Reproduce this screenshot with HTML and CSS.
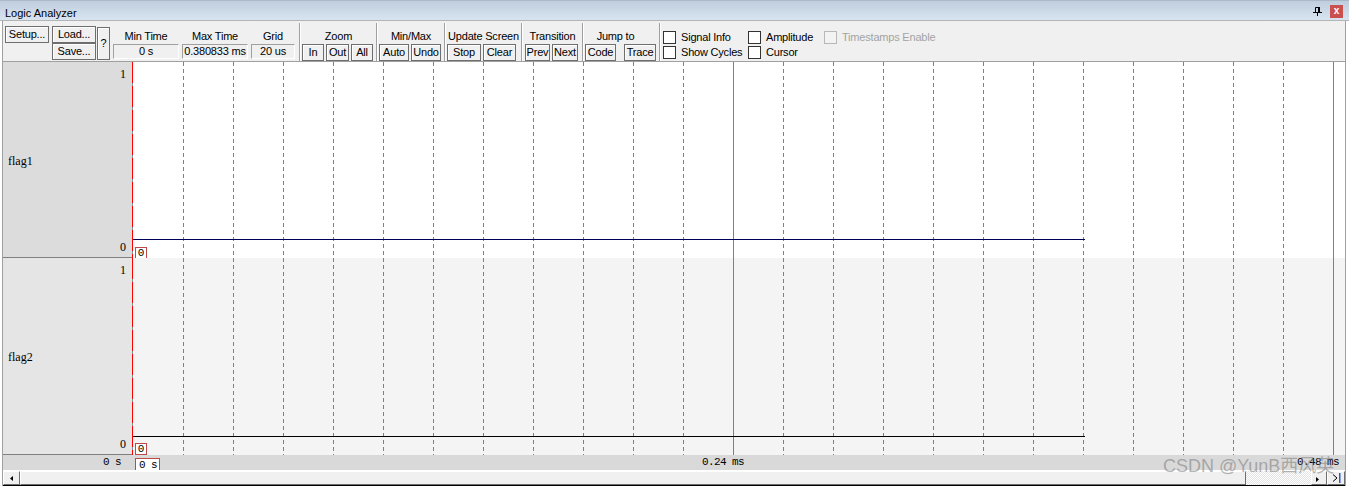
FILE: index.html
```html
<!DOCTYPE html>
<html>
<head>
<meta charset="utf-8">
<title>Logic Analyzer</title>
<link rel="stylesheet" href="styles.css">
</head>
<body>
<div class="app">
  <div class="titlebar">
    <span class="title">Logic Analyzer</span>
    <div class="title-tools">
      <svg class="pin" width="9" height="9" viewBox="0 0 9 9"><path d="M2.5 0.5H5.5V5M2.5 0.5V5" stroke="#000" fill="none"/><rect x="5" y="0" width="2" height="5" fill="#000"/><rect x="0" y="5" width="9" height="1" fill="#000"/><rect x="4" y="6" width="1" height="3" fill="#000"/></svg>
      <span class="close">x</span>
    </div>
  </div>
  <div class="frame">
    <div class="toolbar">
      <div class="filegrp">
        <div class="btn setup">Setup...</div>
        <div class="btn load">Load...</div>
        <div class="btn help">?</div>
        <div class="btn save">Save...</div>
      </div>
      <div class="timegrp">
        <div class="field w66"><span class="lab">Min Time</span><span class="val">0 s</span></div>
        <div class="field w66"><span class="lab">Max Time</span><span class="val">0.380833 ms</span></div>
        <div class="field w44"><span class="lab">Grid</span><span class="val">20 us</span></div>
      </div>
      <div class="sep"></div>
      <div class="grp gz">
        <span class="lab">Zoom</span>
        <div class="btns"><div class="btn b22">In</div><div class="btn b23">Out</div><div class="btn b22">All</div></div>
      </div>
      <div class="sep"></div>
      <div class="grp gm">
        <span class="lab">Min/Max</span>
        <div class="btns"><div class="btn b30">Auto</div><div class="btn b30">Undo</div></div>
      </div>
      <div class="sep"></div>
      <div class="grp gu">
        <span class="lab">Update Screen</span>
        <div class="btns"><div class="btn b34">Stop</div><div class="btn b33">Clear</div></div>
      </div>
      <div class="sep"></div>
      <div class="grp gt">
        <span class="lab">Transition</span>
        <div class="btns"><div class="btn b25">Prev</div><div class="btn b26">Next</div></div>
      </div>
      <div class="sep"></div>
      <div class="grp gj">
        <span class="lab">Jump to</span>
        <div class="btns"><div class="btn b31">Code</div><div class="btn b32">Trace</div></div>
      </div>
      <div class="sep"></div>
      <div class="checks">
        <label class="chk"><span class="box"></span>Signal Info</label>
        <label class="chk"><span class="box"></span>Amplitude</label>
        <label class="chk dis"><span class="box"></span>Timestamps Enable</label>
        <label class="chk"><span class="box"></span>Show Cycles</label>
        <label class="chk"><span class="box"></span>Cursor</label>
      </div>
    </div>

    <div class="scope">
      <div class="row r1">
        <div class="lbl"><span class="hi">1</span><span class="name">flag1</span><span class="lo">0</span></div>
        <div class="mark"></div>
        <div class="plot">
          <div class="grid"><i></i><i></i><i></i><i></i><i></i><i></i><i></i><i></i><i></i><i></i><i></i><i class="solid"></i><i></i><i></i><i></i><i></i><i></i><i></i><i></i><i></i><i></i><i></i><i></i><i class="solid"></i></div>
          <div class="sig"></div>
          <span class="vbox">0</span>
        </div>
      </div>
      <div class="row r2">
        <div class="lbl"><span class="hi">1</span><span class="name">flag2</span><span class="lo">0</span></div>
        <div class="mark"></div>
        <div class="plot">
          <div class="grid"><i></i><i></i><i></i><i></i><i></i><i></i><i></i><i></i><i></i><i></i><i></i><i class="solid"></i><i></i><i></i><i></i><i></i><i></i><i></i><i></i><i></i><i></i><i></i><i></i><i class="solid"></i></div>
          <div class="sig"></div>
          <span class="vbox">0</span>
        </div>
      </div>
      <div class="axis">
        <div class="axl">0 s</div>
        <div class="axp">
          <span class="abox">0 s</span>
          <span class="tick mid">0.24 ms</span>
          <span class="tick end">0.48 ms</span>
        </div>
      </div>
    </div>

    <div class="hscroll">
      <div class="sbb sl"><svg width="3" height="5" viewBox="0 0 3 5"><path d="M3 0V5L0 2.5Z" fill="#000"/></svg></div>
      <div class="thumb"></div>
      <div class="track"></div>
      <div class="sbb sr"><svg width="3" height="5" viewBox="0 0 3 5"><path d="M0 0V5L3 2.5Z" fill="#000"/></svg></div>
      <div class="sbb send"><svg width="9" height="10" viewBox="0 0 9 10"><path d="M1 1.5L5 5L1 8.5" stroke="#000" fill="none"/><rect x="7" y="0" width="1.5" height="10" fill="#2a5bd7"/></svg></div>
    </div>
  </div>
  <div class="watermark">CSDN @YunB西风英</div>
</div>
</body>
</html>
```

FILE: styles.css
```css
* { box-sizing: border-box; margin: 0; padding: 0; }
html, body { background: #fff; }
body {
  font-family: "Liberation Sans", Arial, sans-serif;
  font-size: 11px;
  color: #000;
  width: 1349px;
  height: 487px;
  overflow: hidden;
}
.app { position: relative; width: 1349px; height: 487px; }

/* title bar */
.titlebar {
  height: 21px;
  display: flex;
  background: linear-gradient(#bfcddd, #d8e4f0);
  border-top: 1px solid #aab8c8;
  border-bottom: 1px solid #b4b4b4;
  padding-left: 5px;
}
.title { margin-top: 5px; line-height: 14px; font-size: 11px; }
.title-tools { margin-left: auto; display: flex; align-items: flex-start; gap: 8px; padding-right: 6px; }
.pin { margin-top: 6px; display: block; }
.close {
  margin-top: 4px;
  width: 13px; height: 13px;
  background: #c9504f;
  color: #fff;
  font: bold 10px/12px "Liberation Sans", sans-serif;
  text-align: center;
}

/* frame */
.frame {
  margin-left: 2px;
  width: 1344px;
  border-left: 1px solid #a0a0a0;
  border-right: 1px solid #a0a0a0;
  background: #f0f0f0;
}

/* toolbar */
.toolbar { height: 40px; display: flex; align-items: flex-start; padding-left: 2px; letter-spacing: -0.2px; }
.btn {
  height: 17px;
  border: 1px solid #6e6e6e;
  background: #f0f0f0;
  box-shadow: inset 1px 1px 0 #fff;
  display: flex; align-items: center; justify-content: center;
  line-height: 15px;
  white-space: nowrap;
}
.filegrp {
  display: grid;
  grid-template-columns: 47px 45px 13px;
  grid-template-rows: 17px 17px;
  margin-top: 5px;
}
.setup { width: 44px; grid-column: 1; grid-row: 1; }
.load { width: 44px; grid-column: 2; grid-row: 1; }
.save { width: 44px; grid-column: 2; grid-row: 2; margin-top: 0; }
.help { grid-column: 3; grid-row: 1 / 3; height: auto; margin-top: 1px; }

.timegrp { display: flex; gap: 3px; margin-left: 3px; margin-right: 4px; padding-top: 7px; }
.field { display: flex; flex-direction: column; align-items: center; }
.lab { display: block; line-height: 16px; height: 16px; white-space: nowrap; }
.val {
  display: block;
  height: 15px; width: 100%;
  border: 1px solid;
  border-color: #a0a0a0 #fff #fff #a0a0a0;
  text-align: center;
  line-height: 13px;
  white-space: nowrap;
}
.w66 { width: 66px; }
.w44 { width: 44px; }

.sep {
  width: 2px; height: 38px; margin-top: 2px;
  border-left: 1px solid #a0a0a0;
  border-right: 1px solid #fff;
  flex: none;
}
.grp { display: flex; flex-direction: column; padding-top: 7px; flex: none; }
.grp .lab { text-align: center; }
.btns { display: flex; gap: 2px; padding-left: 1px; }
.gz { width: 75px; }
.gm { width: 66px; }
.gu { width: 75px; }
.gt { width: 59px; }
.gt .btns { padding-left: 2px; }
.gj { width: 75px; }
.gj .lab { padding-right: 12px; }
.gj .btns { gap: 8px; }
.b22 { width: 22px; } .b23 { width: 23px; } .b25 { width: 25px; } .b26 { width: 26px; }
.b30 { width: 30px; } .b31 { width: 31px; } .b32 { width: 32px; } .b33 { width: 33px; } .b34 { width: 34px; }

.checks {
  display: grid;
  grid-template-columns: 85px 76px auto;
  row-gap: 2px;
  padding: 10px 0 0 2px;
}
.chk { display: flex; align-items: center; gap: 5px; height: 13px; white-space: nowrap; line-height: 13px; }
.box { width: 13px; height: 13px; border: 1px solid #333; background: #fff; flex: none; }
.chk.dis { color: #a3a3a3; }
.chk.dis .box { border-color: #b8b8b8; background: #f3f3f3; }

/* scope */
.scope { border-top: 1px solid #a0a0a0; }
.row { display: grid; grid-template-columns: 129px 1px 1fr; }
.r1 { height: 196px; }
.r2 { height: 197px; }
.lbl {
  display: flex; flex-direction: column; justify-content: space-between;
  padding: 5px 6px 3px 5px;
  border-bottom: 1px solid #808080;
  font-family: "Liberation Serif", "DejaVu Serif", serif;
  font-size: 12px;
  line-height: 14px;
}
.r1 .lbl { background: #dcdcdc; }
.r2 .lbl { background: #e5e5e5; }
.hi, .lo { align-self: flex-end; }
.mark { background: repeating-linear-gradient(to bottom, #f00 0 21px, #8c8c8c 21px 24px); }
.plot { position: relative; }
.r1 .plot { background: #fff; }
.r2 .plot { background: #f4f4f4; }
.grid { display: flex; height: 100%; }
.grid i {
  flex: 0 0 50px; height: 100%;
  background: linear-gradient(#808080 0 4px, transparent 4px) right top / 1px 7px repeat-y;
}
.grid i:first-child { flex-basis: 51px; }
.grid i.solid { background: linear-gradient(#808080, #808080) right top / 1px 100% no-repeat; }
.sig { position: absolute; left: 0; height: 1px; width: 952px; }
.r1 .sig { top: 177px; background: #00005a; }
.r2 .sig { top: 178px; background: #000; }
.vbox {
  position: absolute; left: 2px; top: 185px;
  width: 12px; height: 12px;
  border: 1px solid #c04848;
  background: #fff;
  font-family: "Liberation Mono", monospace;
  font-size: 11px; line-height: 10px;
  text-align: center;
}

.axis {
  display: grid; grid-template-columns: 130px 1fr;
  height: 15px;
  background: #d9d9d9;
  font-family: "Liberation Mono", monospace;
  font-size: 11px;
  letter-spacing: -0.6px;
  overflow: hidden;
}
.axl { text-align: right; padding-right: 12px; line-height: 15px; }
.axp { position: relative; }
.abox {
  position: absolute; left: 2px; top: 3px;
  height: 14px; padding: 0 2px 0 3px;
  border: 1px solid #c04848;
  background: #fff;
  line-height: 12px;
  white-space: nowrap;
}
.tick { position: absolute; top: 0; line-height: 15px; white-space: nowrap; }
.tick.mid { left: 569px; }
.tick.end { right: 6px; }

/* scrollbar */
.hscroll {
  display: flex;
  height: 16px;
  border-top: 1px solid #fff;
  border-bottom: 1px solid #000;
  background: #f0f0f0;
}
.sbb, .thumb {
  border: 1px solid;
  border-color: #fff #6e6e6e #6e6e6e #fff;
  background: #f0f0f0;
  display: flex; align-items: center; justify-content: center;
  flex: none;
}
.sbb svg { display: block; }
.sl { width: 17px; }
.thumb { width: 1226px; }
.track { flex: 1; background: repeating-conic-gradient(#fff 0 25%, #e2e2e2 0 50%) 0 0 / 2px 2px; }
.sr { width: 16px; align-items: flex-end; justify-content: flex-start; padding: 0 0 2px 4px; }
.send { width: 18px; }

.watermark {
  position: absolute; left: 1163px; top: 455px;
  font-family: "Liberation Sans", "Noto Sans CJK SC", sans-serif;
  font-size: 18px; line-height: 22px;
  color: rgba(120, 120, 120, 0.55);
  white-space: nowrap;
  pointer-events: none;
}
```
